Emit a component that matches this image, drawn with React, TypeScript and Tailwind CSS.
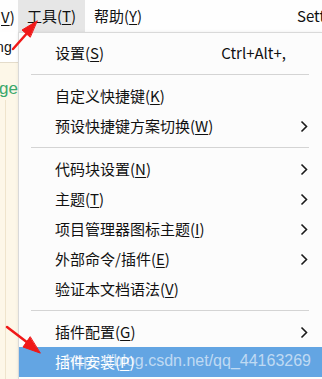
import React from 'react';

type Item =
  | { kind: 'item'; label: string; key: string; shortcut?: string; sub?: boolean; active?: boolean }
  | { kind: 'sep' };

const items: Item[] = [
  { kind: 'item', label: '设置', key: 'S', shortcut: 'Ctrl+Alt+,' },
  { kind: 'sep' },
  { kind: 'item', label: '自定义快捷键', key: 'K' },
  { kind: 'item', label: '预设快捷键方案切换', key: 'W', sub: true },
  { kind: 'sep' },
  { kind: 'item', label: '代码块设置', key: 'N', sub: true },
  { kind: 'item', label: '主题', key: 'T', sub: true },
  { kind: 'item', label: '项目管理器图标主题', key: 'I', sub: true },
  { kind: 'item', label: '外部命令/插件', key: 'E', sub: true },
  { kind: 'item', label: '验证本文档语法', key: 'V' },
  { kind: 'sep' },
  { kind: 'item', label: '插件配置', key: 'G', sub: true },
  { kind: 'item', label: '插件安装', key: 'P', active: true },
];

const Chevron = ({ light }: { light?: boolean }) => (
  <svg width="8" height="13" viewBox="0 0 8 13" className={light ? 'text-white' : 'text-[#1a1a1a]'}>
    <path d="M1.5 1.5 L6.5 6.5 L1.5 11.5" fill="none" stroke="currentColor" strokeWidth="1.6" />
  </svg>
);

const Label = ({ label, k }: { label: string; k: string }) => (
  <span>
    {label}(<span className="underline underline-offset-2">{k}</span>)
  </span>
);

const App: React.FC = () => {
  return (
    <div
      className="relative w-[322px] h-[379px] overflow-hidden bg-white text-[15px] text-[#111]"
      style={{ fontFamily: '"Noto Sans CJK SC", "Noto Sans", sans-serif' }}
    >
      {/* menu bar */}
      <div className="flex h-[32px] items-center bg-[#fefefe] whitespace-nowrap">
        <div className="w-[18px] shrink-0 pl-[1px] leading-none">
          <span className="underline underline-offset-2">V</span>)
        </div>
        <div className="flex h-full w-[67px] shrink-0 items-center justify-center bg-[#e6e6e6]">
          <Label label="工具" k="T" />
        </div>
        <div className="ml-[9px] w-[52px] shrink-0">
          <Label label="帮助" k="Y" />
        </div>
        <div className="ml-[151px] shrink-0">Settings</div>
      </div>

      <div className="flex h-[347px]">
        {/* left editor strip */}
        <div className="flex w-[18px] shrink-0 flex-col">
          <div className="h-[31px] border-b border-[#e4dccb] bg-white pt-[8px] text-[14px] leading-none -ml-[4px] whitespace-nowrap overflow-hidden" style={{ fontFamily: '"Liberation Sans", sans-serif' }}>
            <span className="-ml-[3px]">ing</span>
          </div>
          <div className="flex-1 bg-[#fdf7e8]">
            <div className="h-[37px] pt-[17px] text-[17px] leading-none text-[#3aa86b] -ml-[1px] overflow-hidden whitespace-nowrap" style={{ fontFamily: '"Liberation Sans", sans-serif' }}>
              ge
            </div>
            <div className="ml-[5px] h-full border-l border-[#efe4cc]" />
          </div>
        </div>

        {/* dropdown menu */}
        <div className="flex-1 border-l border-t border-[#d9d9d9] bg-[#fcfcfc] pt-[5px] shadow-[0_0_3px_rgba(0,0,0,0.08)]">
          {items.map((it, i) =>
            it.kind === 'sep' ? (
              <div key={i} className="flex h-[13px] items-center pl-[12px] pr-[13px]">
                <div className="h-px w-full bg-[#d4d4d4]" />
              </div>
            ) : (
              <div
                key={i}
                className={`flex h-[30px] items-center whitespace-nowrap pl-[36px] pr-[14px] ${
                  it.active ? 'bg-[#63a5e3] text-white' : ''
                }`}
              >
                <Label label={it.label} k={it.key} />
                {it.shortcut && (
                  <span className="ml-auto mr-[22px]">{it.shortcut}</span>
                )}
                {it.sub && (
                  <span className="ml-auto">
                    <Chevron light={it.active} />
                  </span>
                )}
              </div>
            )
          )}
        </div>
      </div>

      {/* watermark */}
      <div
        className="pointer-events-none absolute right-[11px] top-[349px] text-[16px] text-white/60"
        style={{ fontFamily: '"Liberation Sans", sans-serif' }}
      >
        https://blog.csdn.net/qq_44163269
      </div>

      {/* red annotation arrows */}
      <svg className="pointer-events-none absolute left-0 top-0" width="322" height="379">
        <g fill="#f01818" stroke="#f01818" strokeWidth="2.5" strokeLinecap="round">
          <line x1="13" y1="49" x2="29" y2="31" />
          <polygon points="37,21 22,30 30,37" strokeWidth="1" />
          <line x1="7" y1="327" x2="28" y2="343" />
          <polygon points="40,353 23,347 30,337" strokeWidth="1" />
        </g>
      </svg>
    </div>
  );
};

export default App;
